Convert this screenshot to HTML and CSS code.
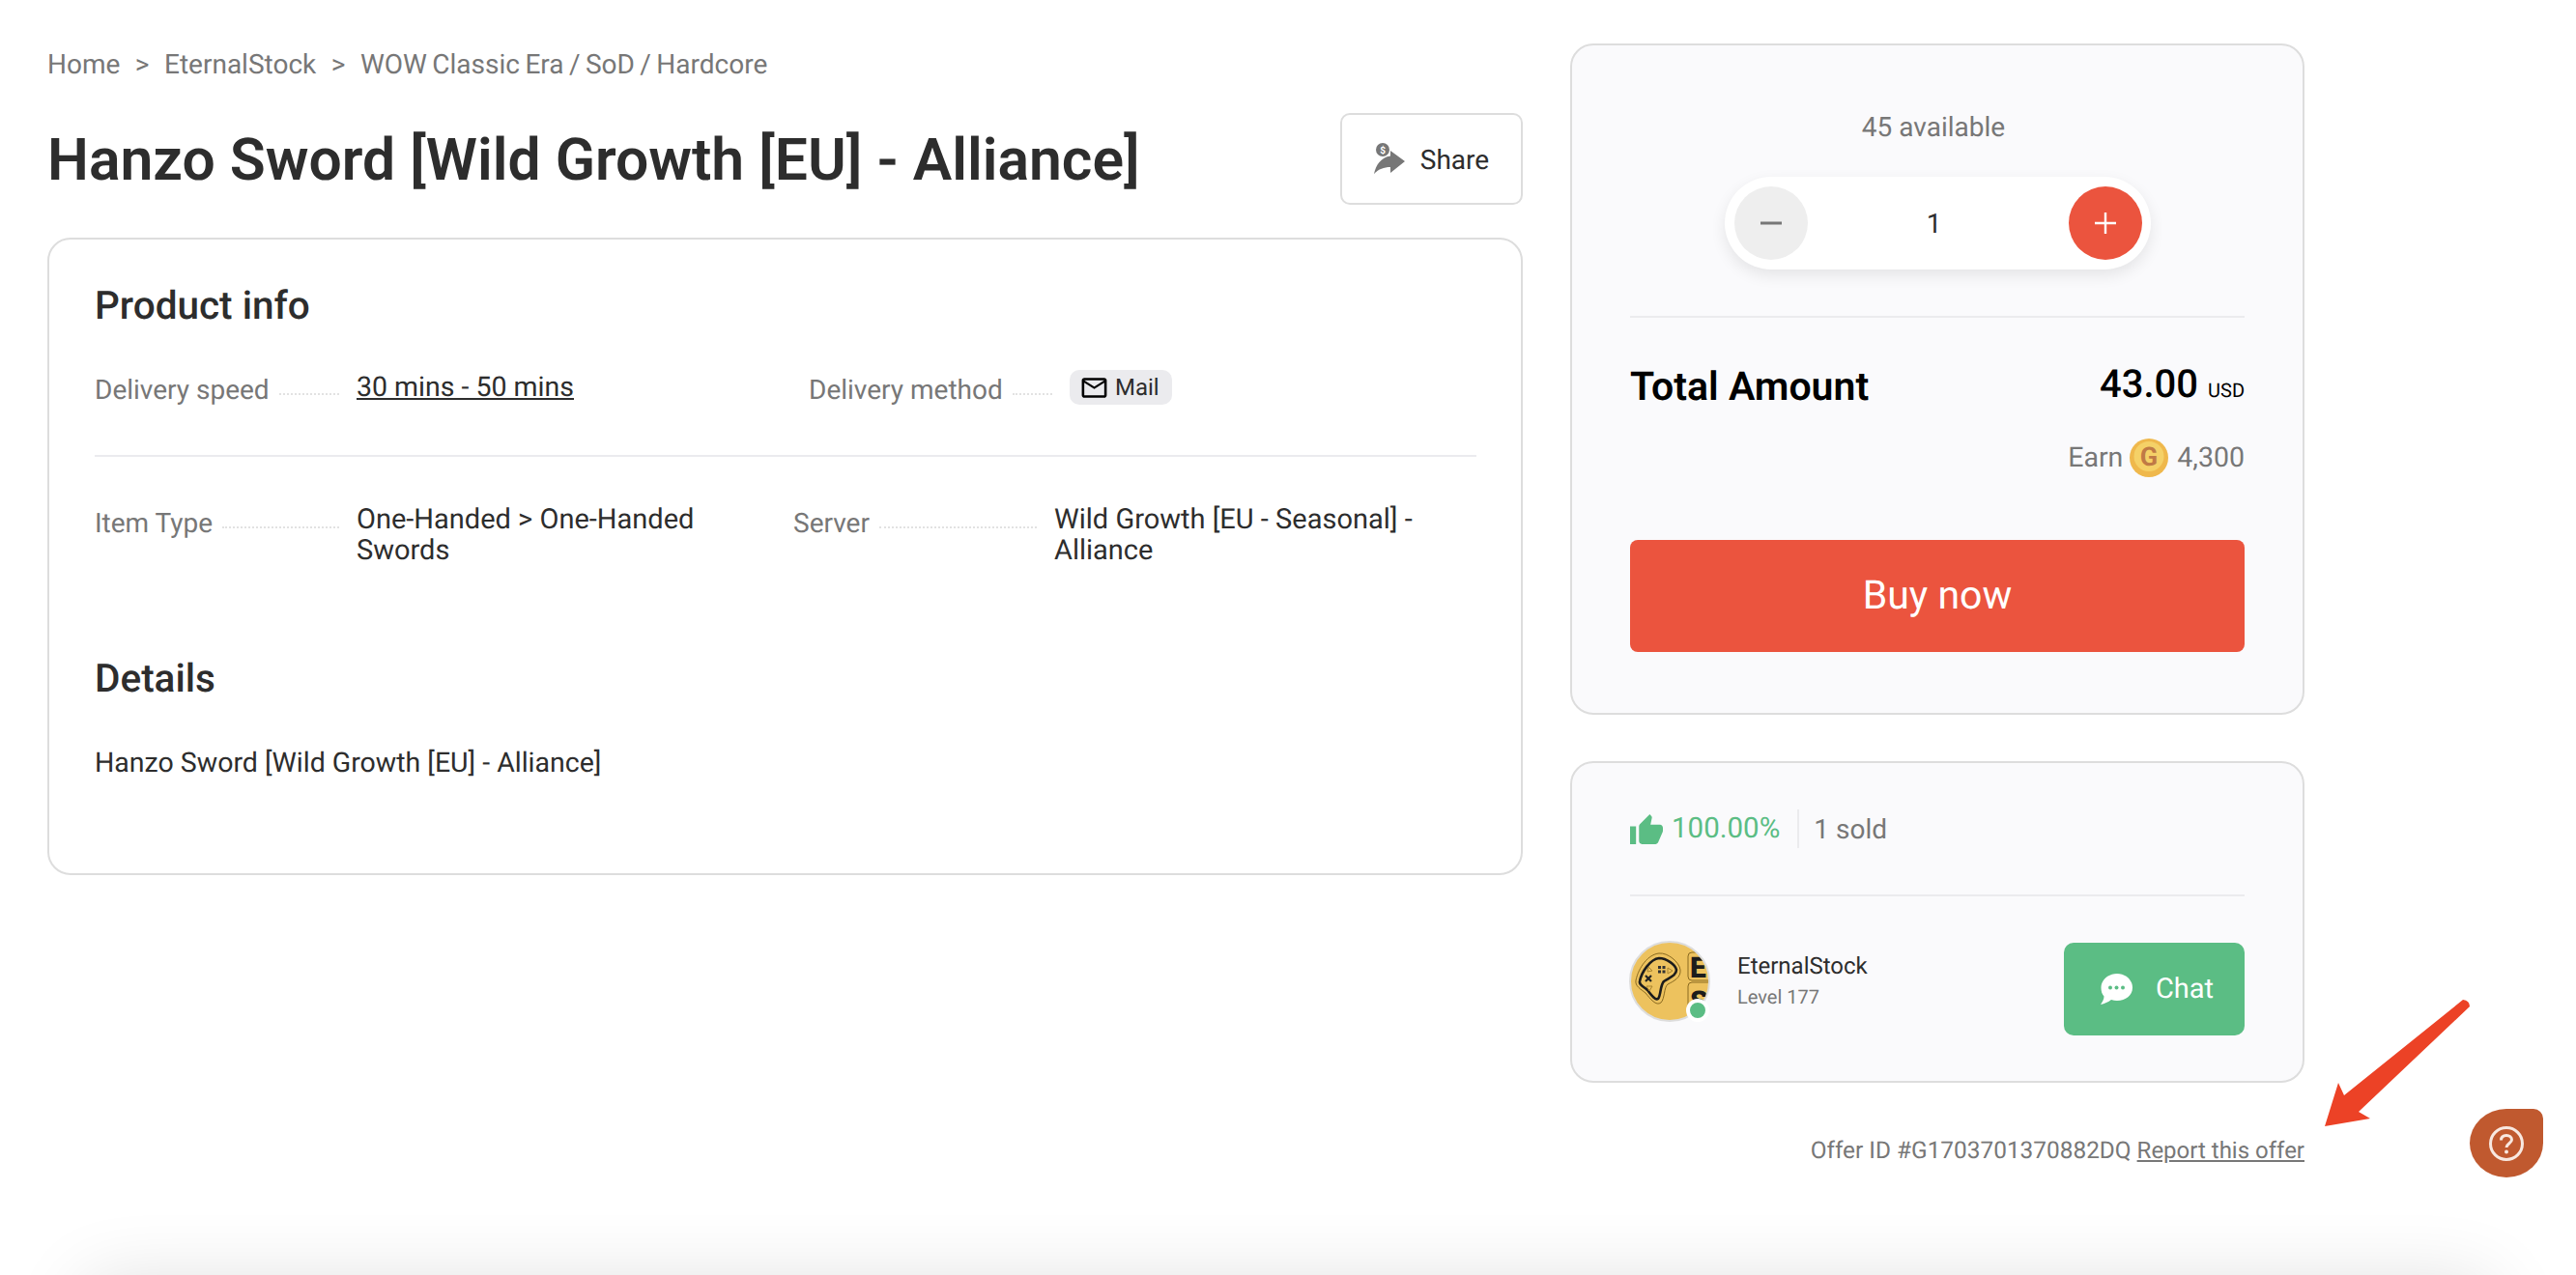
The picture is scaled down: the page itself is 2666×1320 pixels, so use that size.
FILE: index.html
```html
<!DOCTYPE html>
<html lang="en">
<head>
    <meta charset="UTF-8">
    <meta name="viewport" content="width=device-width, initial-scale=1.0">
    <title>Hanzo Sword [Wild Growth [EU] - Alliance]</title>
    <link rel="stylesheet" href="styles.css">
</head>
<body>

<div class="top-bar"></div>

<div class="main">
    <div class="left-col">
        <div class="breadcrumb">
            <a href="#">Home</a><span class="crumb-sep">&gt;</span><a href="#">EternalStock</a><span class="crumb-sep">&gt;</span><a href="#" class="crumb-last">WOW Classic Era / SoD / Hardcore</a>
        </div>

        <div class="title-row">
            <h1>Hanzo Sword [Wild Growth [EU] - Alliance]</h1>
            <button class="share-btn">
                <svg class="share-icon" viewBox="0 0 34 34">
                    <circle cx="9" cy="7" r="7" fill="#777"/>
                    <text x="9" y="11" class="share-dollar">$</text>
                    <path d="M32 19 L17 8 V13.5 C7 15 2 23 0 32 C5 27 10 25 17 25 V31 Z" fill="#777"/>
                </svg>
                Share
            </button>
        </div>

        <div class="card info-card">
            <h2>Product info</h2>
            <div class="info-row row-delivery">
                <div class="info-item">
                    <div class="info-label">Delivery speed<span class="dots"></span></div>
                    <a href="#" class="info-link">30 mins - 50 mins</a>
                </div>
                <div class="info-item">
                    <div class="info-label">Delivery method<span class="dots"></span></div>
                    <span class="badge">
                        <svg class="mail-icon" viewBox="0 0 24 24"><path d="M20 4H4c-1.1 0-2 .9-2 2v12c0 1.1.9 2 2 2h16c1.1 0 2-.9 2-2V6c0-1.1-.9-2-2-2zm0 14H4V8l8 5 8-5v10zm-8-7L4 6h16l-8 5z"/></svg>
                        Mail
                    </span>
                </div>
            </div>
            <hr class="divider info-divider">
            <div class="info-row row-type">
                <div class="info-item">
                    <div class="info-label">Item Type<span class="dots"></span></div>
                    <div class="info-value">One-Handed &gt; One-Handed Swords</div>
                </div>
                <div class="info-item">
                    <div class="info-label">Server<span class="dots"></span></div>
                    <div class="info-value">Wild Growth [EU - Seasonal] - Alliance</div>
                </div>
            </div>
            <h2 class="details-title">Details</h2>
            <p class="details-text">Hanzo Sword [Wild Growth [EU] - Alliance]</p>
        </div>
    </div>

    <div class="right-col">
        <div class="card side-card buy-card">
            <div class="available">45 available</div>
            <div class="stepper">
                <button class="step-btn minus">
                    <svg viewBox="0 0 24 24"><path d="M1 12h22" stroke="#777" stroke-width="3"/></svg>
                </button>
                <span class="qty">1</span>
                <button class="step-btn plus">
                    <svg viewBox="0 0 24 24"><path d="M1 12h22M12 1v22" stroke="#fff" stroke-width="2.4"/></svg>
                </button>
            </div>
            <hr class="divider">
            <div class="total-row">
                <span class="total-label">Total Amount</span>
                <span class="total-price">43.00 <small>USD</small></span>
            </div>
            <div class="earn-row">
                Earn
                <svg class="coin" viewBox="0 0 40 40">
                    <circle cx="20" cy="20" r="20" fill="#efb84c"/>
                    <circle cx="20" cy="18.5" r="15.5" fill="#f5d167"/>
                    <text x="20" y="28" class="coin-letter">G</text>
                </svg>
                4,300
            </div>
            <button class="buy-btn">Buy now</button>
        </div>

        <div class="card side-card seller-card">
            <div class="stats">
                <span class="rating">
                    <svg class="thumb" viewBox="1 1 22 20"><path d="M1 21h4V9H1v12zm22-11c0-1.1-.9-2-2-2h-6.31l.95-4.57.03-.32c0-.41-.17-.79-.44-1.06L14.17 1 7.59 7.59C7.22 7.95 7 8.45 7 9v10c0 1.1.9 2 2 2h9c.83 0 1.54-.5 1.84-1.22l3.02-7.05c.09-.23.14-.47.14-.73v-2z"/></svg>
                    100.00%
                </span>
                <span class="sold">1 sold</span>
            </div>
            <hr class="divider">
            <div class="seller-row">
                <div class="avatar">
                    <svg viewBox="0 0 84 84">
                        <defs><clipPath id="avatarClip"><circle cx="42" cy="42" r="40"/></clipPath></defs>
                        <circle cx="42" cy="42" r="41" fill="#edc25e" stroke="#ddd" stroke-width="2"/>
                        <g clip-path="url(#avatarClip)">
                            <path d="M7 41 C10 27 20 14 31 13 C40 12 52 22 53 30 C54 38 46 42 40 45 C36 48 37 60 33 64 C28 68 22 60 17 54 C12 50 6 47 7 41 Z" fill="none" stroke="#8a6a20" stroke-width="1"/>
                            <path d="M11 42 C13 32 22 19 31 18 C39 18 48 25 49 30 C49 36 42 38 36 42 C32 46 33 57 30 60 C27 62 23 56 19 51 C15 47 10 46 11 42 Z" fill="none" stroke="#1c1c1c" stroke-width="2.6"/>
                            <path d="M30 26h3v3h-3zM34.500 26h3v3h-3zM30 30.500h3v3h-3zM34.500 30.500h3v3h-3z" fill="#333"/>
                            <path d="M17 36l6 6M23 36l-6 6" stroke="#222" stroke-width="2.2"/>
                            <path d="M24 31l-4-4 -1 5z M40 28l5 3 -5 3z M18 47l6 0 -3 5z" fill="none" stroke="#a98430" stroke-width="1"/>
                            <rect x="61" y="12" width="26" height="29" rx="4" fill="none" stroke="#8a6a20" stroke-width="1"/>
                            <rect x="61" y="43" width="26" height="29" rx="4" fill="none" stroke="#8a6a20" stroke-width="1"/>
                            <text x="63" y="38" class="avatar-letter">E</text>
                            <text x="63" y="73" class="avatar-letter">S</text>
                        </g>
                    </svg>
                    <span class="online-dot"></span>
                </div>
                <div class="seller-info">
                    <div class="seller-name">EternalStock</div>
                    <div class="seller-level">Level 177</div>
                </div>
                <button class="chat-btn">
                    <svg class="chat-icon" viewBox="0 0 33 32">
                        <path d="M17 0 C26 0 33 6.500 33 14.500 C33 22.500 26 28 17 28 C15 28 13 27.700 11 27 C8 29.500 4 31 0 32 C2 29 3.500 26.500 3.500 23.500 C1.300 21 0.500 18 0.500 14.500 C0.500 6.500 8 0 17 0 Z" fill="#fff"/>
                        <circle cx="10" cy="14.500" r="2" fill="#5bbd84"/>
                        <circle cx="16.500" cy="14.500" r="2" fill="#5bbd84"/>
                        <circle cx="23" cy="14.500" r="2" fill="#5bbd84"/>
                    </svg>
                    Chat
                </button>
            </div>
        </div>

        <div class="offer-line"><span class="offer-id">Offer ID #G1703701370882DQ</span> <a href="#">Report this offer</a></div>
    </div>
</div>

<div class="footer"></div>

<svg class="red-arrow" viewBox="0 0 160 140">
    <path d="M0 131 L14 86 L20 99 L143 0 Q150 1 150 7 L35 116 L47 123 Z" fill="#ec4226"/>
</svg>

<div class="help-bubble">
    <svg viewBox="0 0 36 36">
        <circle cx="18" cy="18" r="16.500" fill="none" stroke="#f8e8e0" stroke-width="3"/>
        <path d="M12.500 14.500 C12.500 11 15 9.500 18 9.500 C21 9.500 23.500 11.300 23.500 14 C23.500 17.500 18 18 18 22" fill="none" stroke="#f8e8e0" stroke-width="3"/>
        <circle cx="18" cy="26.500" r="2" fill="#f8e8e0"/>
    </svg>
</div>

</body>
</html>
```

FILE: styles.css
```css
html, body {
    margin: 0;
    height: 1320px;
    overflow: hidden;
    background-color: #fff;
}
body {
    font-family: Roboto, Arial, sans-serif;
    color: #2d2d2d;
    position: relative;
    text-rendering: geometricPrecision;
}
a {
    color: inherit;
}
button {
    font-family: inherit;
    border: none;
    cursor: pointer;
    text-rendering: inherit;
}
hr.divider {
    border: none;
    border-top: 2px solid #ebebee;
    margin: 0;
}

.top-bar {
    height: 0;
    box-shadow: 0 0 18px rgba(0, 0, 0, 0.16);
}
.main {
    display: flex;
    gap: 49px;
    height: 1320px;
    padding-left: 49px;
}
.left-col {
    width: 1527px;
    padding-top: 47px;
}
.right-col {
    width: 760px;
    padding-top: 45px;
}

.breadcrumb {
    font-size: 28px;
    line-height: 40px;
    color: #777;
}
.breadcrumb a {
    text-decoration: none;
}
.crumb-sep {
    margin: 0 15.500px;
}
.crumb-last {
    word-spacing: -1.500px;
}
.title-row {
    display: flex;
    justify-content: space-between;
    align-items: center;
    margin-top: 30px;
    height: 95px;
}
h1 {
    margin: 0;
    padding-top: 2px;
    font-size: 60.600px;
    font-weight: 600;
    line-height: 76px;
}
.share-btn {
    display: flex;
    align-items: center;
    justify-content: center;
    gap: 14px;
    width: 189px;
    height: 95px;
    padding-top: 2px;
    font-size: 28px;
    color: #2d2d2d;
    background-color: #fff;
    border: 2px solid #ddd;
    border-radius: 10px;
}
.share-icon {
    width: 34px;
    height: 34px;
}
.share-dollar {
    font-size: 10px;
    font-weight: 700;
    fill: #fff;
    text-anchor: middle;
}

.card {
    border: 2px solid #ddd;
    border-radius: 24px;
    box-sizing: border-box;
}
.info-card {
    margin-top: 34px;
    height: 660px;
    padding: 46px 46px 0 47px;
}
h2 {
    margin: 0;
    font-size: 40.500px;
    font-weight: 500;
    line-height: 44px;
}
.info-row {
    display: grid;
}
.row-delivery {
    grid-template-columns: 739px 1fr;
    margin-top: 45px;
}
.row-type {
    grid-template-columns: 723px 1fr;
    margin-top: 49px;
}
.info-item {
    display: flex;
    align-items: flex-start;
}
.info-label {
    display: flex;
    align-items: center;
    width: 271px;
    padding-right: 18px;
    box-sizing: border-box;
    flex-shrink: 0;
    font-size: 28px;
    line-height: 36px;
    color: #777;
}
.row-delivery .info-label {
    padding-top: 3px;
}
.row-type .info-label {
    line-height: 40px;
}
.row-delivery .info-item + .info-item .info-label,
.row-type .info-item + .info-item .info-label {
    width: 270px;
}
.dots {
    flex: 1;
    margin: 8px 0 0 10px;
    border-top: 2px dotted #e2e2e2;
}
.info-link {
    padding-top: 1px;
    font-size: 28.500px;
    line-height: 34px;
    color: #2d2d2d;
}
.info-value {
    max-width: 400px;
    font-size: 29px;
    line-height: 32px;
}
.badge {
    display: flex;
    align-items: center;
    gap: 6px;
    height: 36px;
    padding: 0 13px 0 10px;
    font-size: 24px;
    background-color: #ebebee;
    border-radius: 10px;
}
.mail-icon {
    width: 31px;
    height: 31px;
}
hr.info-divider {
    margin-top: 49px;
}
.details-title {
    margin-top: 94px;
}
.details-text {
    margin: 50px 0 0;
    font-size: 28.500px;
    line-height: 32px;
}

.side-card {
    background-color: #fafafc;
    padding: 0 60px;
}
.buy-card {
    height: 695px;
    padding-top: 65px;
}
.available {
    padding-right: 8px;
    font-size: 28px;
    line-height: 40px;
    color: #777;
    text-align: center;
}
.stepper {
    display: flex;
    align-items: center;
    justify-content: space-between;
    width: 441px;
    height: 96px;
    margin: 31px auto 48px;
    padding: 0 9px 0 10px;
    box-sizing: border-box;
    background-color: #fff;
    border-radius: 48px;
    box-shadow: 0 6px 16px rgba(0, 0, 0, 0.09);
}
.step-btn {
    display: flex;
    align-items: center;
    justify-content: center;
    width: 76px;
    height: 76px;
    padding: 0;
    border-radius: 50%;
}
.step-btn svg {
    width: 24px;
    height: 24px;
}
.minus {
    background-color: #eee;
}
.plus {
    background-color: #eb543e;
}
.qty {
    margin-right: 8px;
    font-size: 28px;
}
.total-row {
    display: flex;
    justify-content: space-between;
    align-items: center;
    margin-top: 45px;
    line-height: 48px;
    color: #000;
}
.total-label {
    font-size: 41px;
    font-weight: 600;
}
.total-price {
    font-size: 40px;
    font-weight: 500;
}
.total-price small {
    font-size: 20px;
    font-weight: 400;
}
.earn-row {
    display: flex;
    justify-content: flex-end;
    align-items: center;
    gap: 7px;
    margin-top: 26px;
    font-size: 28.500px;
    line-height: 40px;
    color: #777;
}
.coin {
    width: 40px;
    height: 40px;
    margin-right: 2px;
}
.coin-letter {
    font-size: 27px;
    font-weight: 700;
    fill: #c07a45;
    text-anchor: middle;
}
.buy-btn {
    display: block;
    width: 100%;
    height: 116px;
    margin-top: 65px;
    font-size: 41px;
    color: #fff;
    background-color: #eb543e;
    border-radius: 8px;
}

.seller-card {
    height: 333px;
    margin-top: 48px;
    padding-top: 48px;
}
.stats {
    display: flex;
    align-items: center;
    height: 40px;
    margin-bottom: 48px;
    font-size: 28px;
}
.rating {
    display: flex;
    align-items: center;
    gap: 9px;
    padding-right: 18px;
    height: 40px;
    font-size: 29.500px;
    color: #5bbd84;
    border-right: 2px solid #ebebee;
}
.thumb {
    width: 34px;
    height: 31px;
    fill: #5bbd84;
}
.sold {
    margin-left: 15px;
    color: #777;
}
.seller-row {
    display: flex;
    align-items: flex-start;
    margin-top: 48px;
}
.avatar {
    position: relative;
    width: 84px;
    height: 84px;
    margin: -2px 0 0 -1px;
}
.avatar svg {
    display: block;
    width: 84px;
    height: 84px;
}
.avatar-letter {
    font-size: 30px;
    font-weight: 900;
    fill: #1c1c1c;
}
.online-dot {
    position: absolute;
    right: 1px;
    bottom: 0;
    width: 16px;
    height: 16px;
    background-color: #5bbd84;
    border: 4px solid #fff;
    border-radius: 50%;
}
.seller-info {
    flex: 1;
    margin: 8px 0 0 28px;
}
.seller-name {
    font-size: 24px;
    line-height: 32px;
}
.seller-level {
    font-size: 20px;
    line-height: 28px;
    margin-top: 2px;
    color: #777;
}
.chat-btn {
    display: flex;
    align-items: center;
    justify-content: center;
    gap: 24px;
    width: 187px;
    height: 96px;
    padding: 0 0 0 6px;
    font-size: 29px;
    color: #fff;
    background-color: #5bbd84;
    border-radius: 10px;
}
.chat-icon {
    width: 33px;
    height: 32px;
}
.offer-line {
    margin-top: 54px;
    font-size: 24px;
    line-height: 32px;
    color: #777;
    text-align: right;
}
.offer-id {
    font-size: 24.400px;
}

.footer {
    height: 100px;
    margin: 10px 90px 0;
    box-shadow: 0 0 80px rgba(0, 0, 0, 0.14);
}

.red-arrow {
    position: absolute;
    left: 2406px;
    top: 1035px;
    width: 160px;
    height: 140px;
}
.help-bubble {
    position: absolute;
    left: 2556px;
    top: 1148px;
    display: flex;
    align-items: center;
    justify-content: center;
    width: 76px;
    height: 71px;
    background-color: #c0592f;
    border-radius: 50% 10px 50% 50%;
}
.help-bubble svg {
    width: 36px;
    height: 36px;
}
```
